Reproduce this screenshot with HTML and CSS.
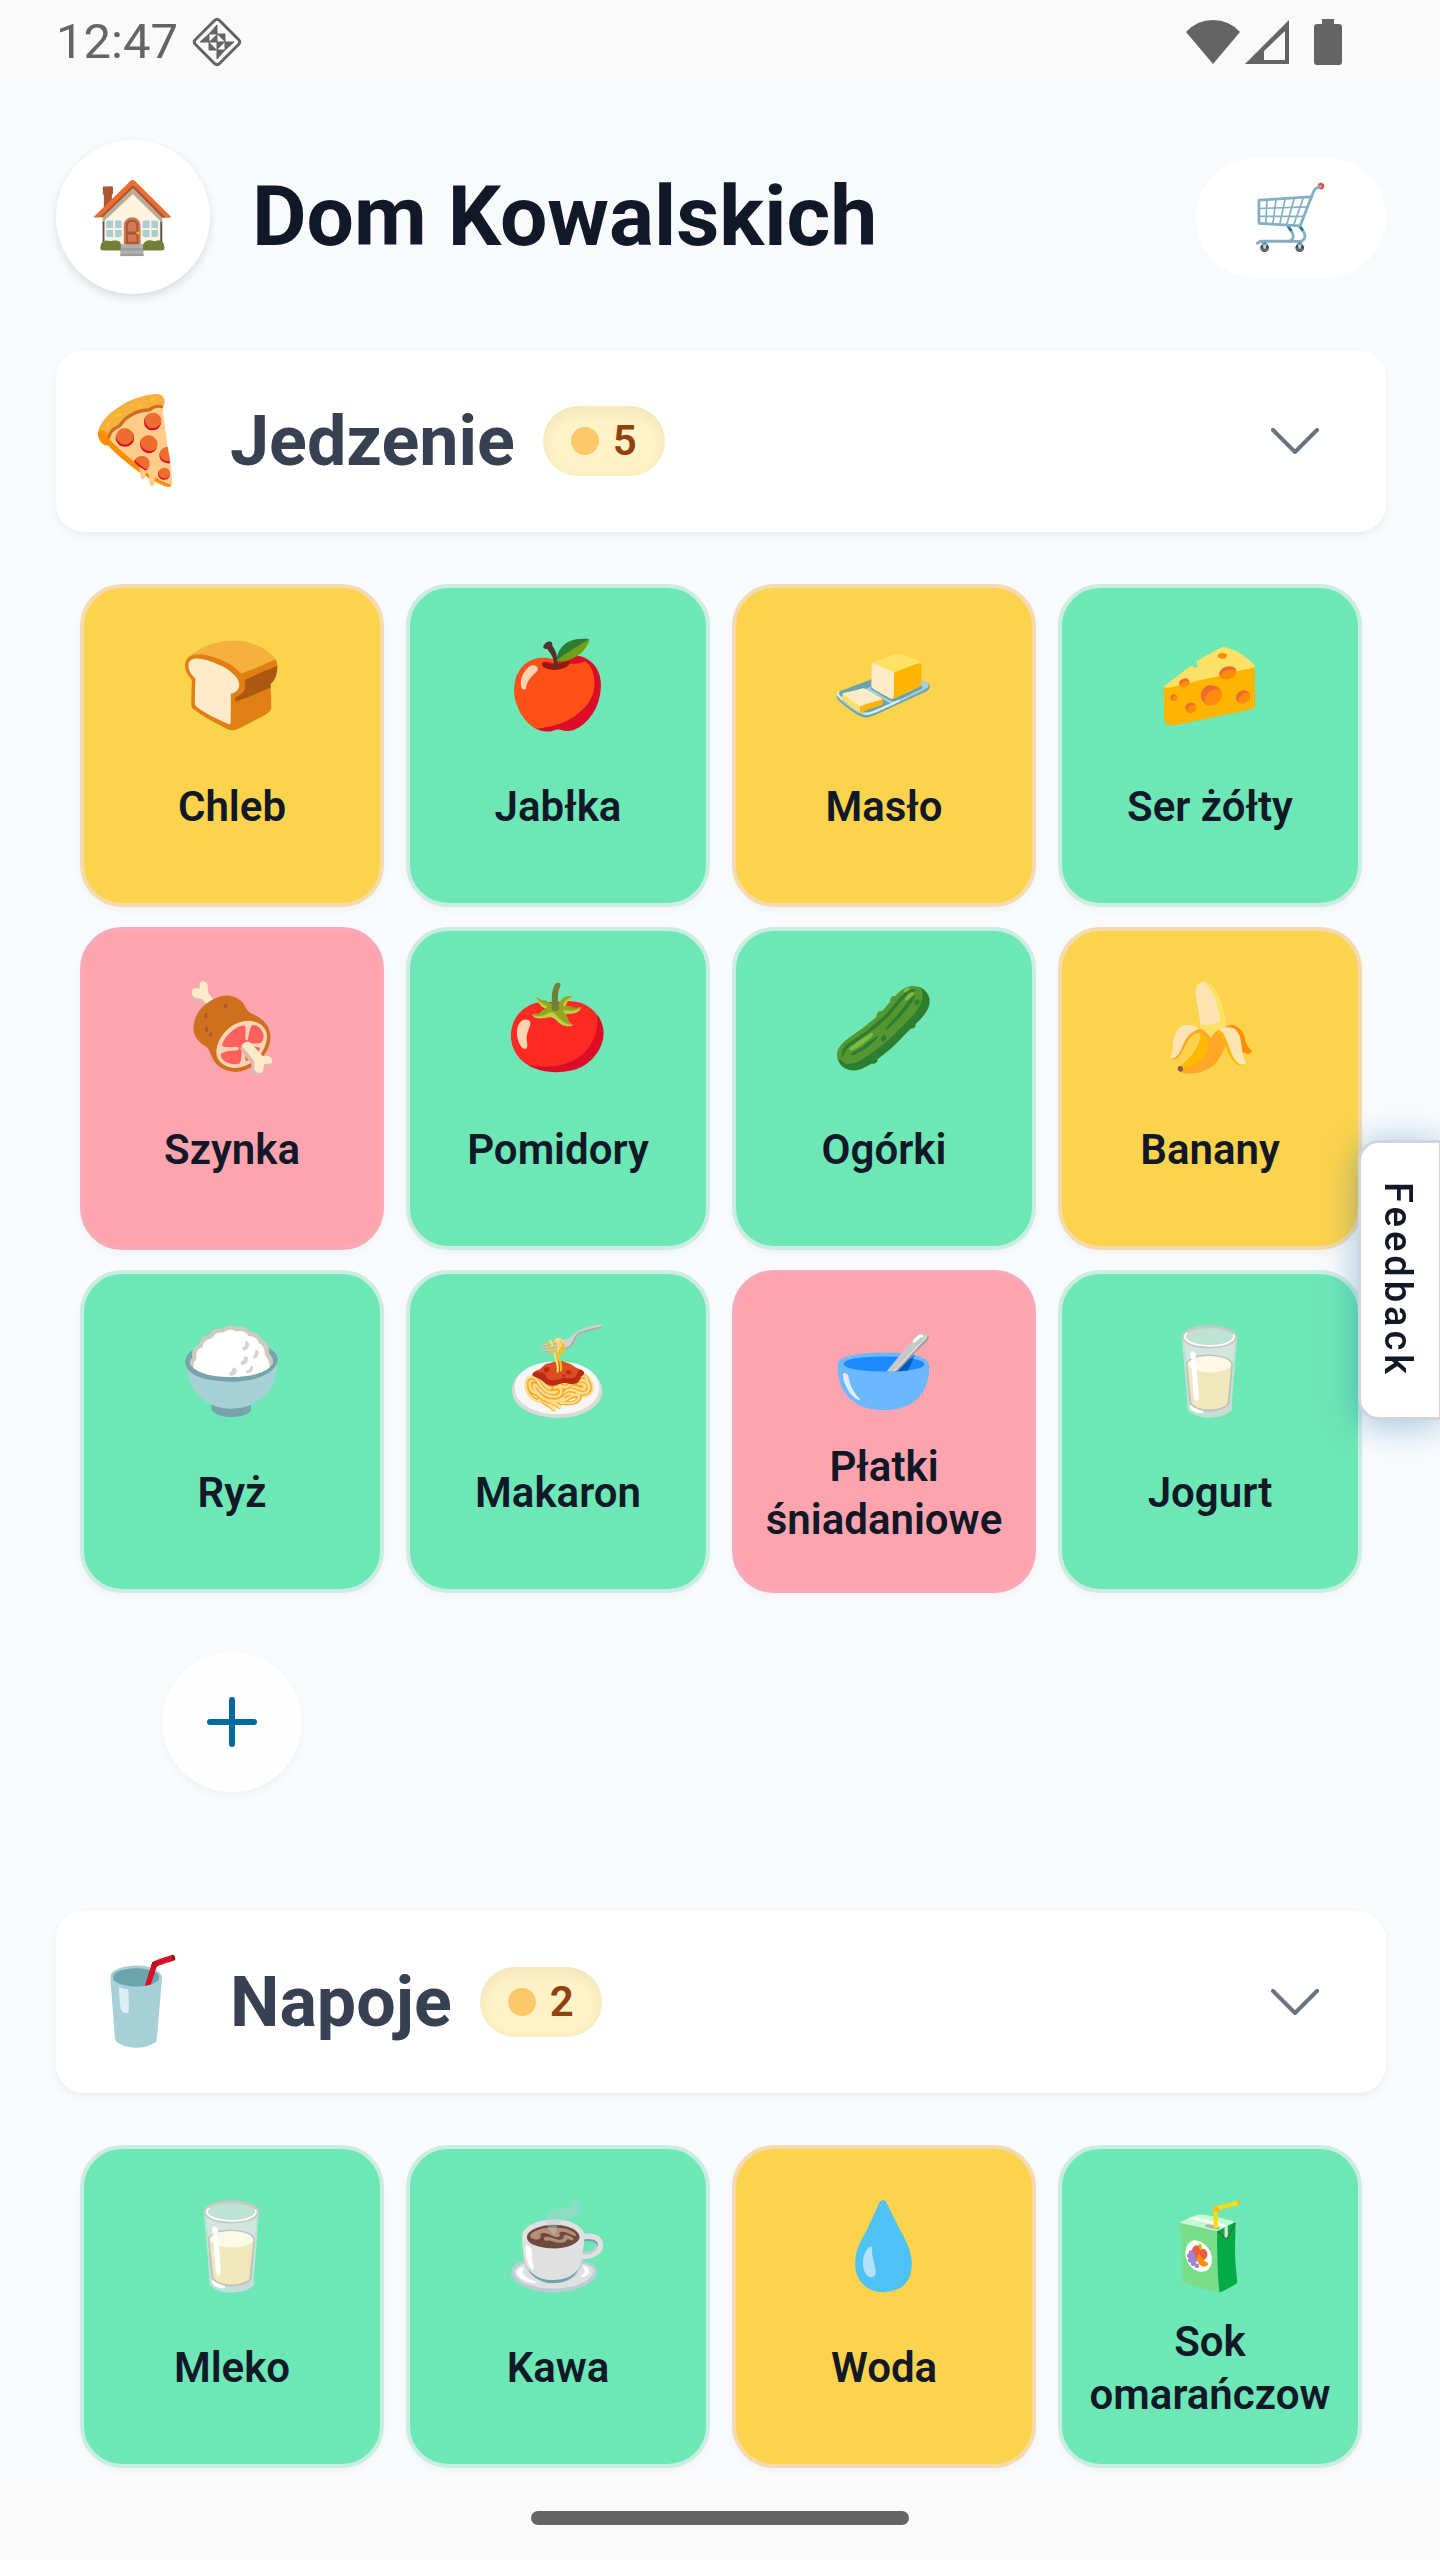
FILE: index.html
```html
<!DOCTYPE html>
<html lang="pl">
<head>
<meta charset="utf-8">
<meta name="viewport" content="width=device-width, initial-scale=1">
<title>Dom Kowalskich</title>
<link rel="stylesheet" href="styles.css">
</head>
<body>
<div class="status-bar">
  <div class="status-left">
    <span class="clock">12:47</span>
    <svg class="status-diamond" viewBox="0 0 50 50" fill="none" stroke="currentColor" aria-hidden="true">
      <path d="M22.500 3.500q2.500-2.500 5 0L46.500 22.500q2.500 2.500 0 5L27.500 46.500q-2.500 2.500-5 0L3.500 27.500q-2.500-2.500 0-5z" stroke-width="3"/>
      <path d="M25 8v9h-8zM17 17v8H8zM25 42v-9h8zM33 33v-8h9zM25 17h8v8zM17 25v8h8zM17 25l8-8v8zM25 25h8l-8 8z" fill="currentColor" stroke="none"/>
      <path d="M17 17h16v16H17zM25 8v34M8 25h34M17 17L8 25M25 8l-8 9M33 33l9-8M25 42l8-9" stroke-width="1"/>
    </svg>
  </div>
  <div class="status-right">
    <svg width="54" height="46" viewBox="0 0 54 46" fill="currentColor" aria-hidden="true"><path d="M0 13Q11 1 27 1T54 13L27 45z"/></svg>
    <svg width="46" height="46" viewBox="0 0 46 46" fill="currentColor" fill-rule="evenodd" aria-hidden="true"><path d="M45 1V45H1zM41 12L20 32v9h21z"/></svg>
    <svg class="battery" width="28" height="46" viewBox="0 0 28 46" fill="currentColor" aria-hidden="true"><path d="M8 0h12v5h5q3 0 3 3v35q0 3-3 3H3q-3 0-3-3V8q0-3 3-3h5z"/></svg>
  </div>
</div>

<main class="content">
  <header class="app-header">
    <button class="home-button" type="button" aria-label="Dom"><span class="emoji">🏠</span></button>
    <h1 class="title">Dom Kowalskich</h1>
    <button class="cart-button" type="button" aria-label="Lista zakupów"><span class="emoji">🛒</span></button>
  </header>

  <section class="category">
    <h2 class="category-heading">
      <button class="category-toggle" type="button" aria-expanded="true">
        <span class="emoji category-icon">🍕</span>
        <span>Jedzenie</span>
        <span class="badge"><span class="badge-dot"></span>5</span>
        <svg class="chevron" viewBox="0 0 48 26" fill="none" stroke="currentColor" stroke-width="4" stroke-linecap="round" stroke-linejoin="round" aria-hidden="true"><path d="M2 2L24 24 46 2"/></svg>
      </button>
    </h2>
    <div class="grid">
      <button type="button" class="item low"><span class="emoji">🍞</span><span class="label">Chleb</span></button>
      <button type="button" class="item ok"><span class="emoji">🍎</span><span class="label">Jabłka</span></button>
      <button type="button" class="item low"><span class="emoji">🧈</span><span class="label">Masło</span></button>
      <button type="button" class="item ok"><span class="emoji">🧀</span><span class="label">Ser żółty</span></button>
      <button type="button" class="item out"><span class="emoji">🍖</span><span class="label">Szynka</span></button>
      <button type="button" class="item ok"><span class="emoji">🍅</span><span class="label">Pomidory</span></button>
      <button type="button" class="item ok"><span class="emoji">🥒</span><span class="label">Ogórki</span></button>
      <button type="button" class="item low"><span class="emoji">🍌</span><span class="label">Banany</span></button>
      <button type="button" class="item ok"><span class="emoji">🍚</span><span class="label">Ryż</span></button>
      <button type="button" class="item ok"><span class="emoji">🍝</span><span class="label">Makaron</span></button>
      <button type="button" class="item out"><span class="emoji">🥣</span><span class="label">Płatki śniadaniowe</span></button>
      <button type="button" class="item ok"><span class="emoji">🥛</span><span class="label">Jogurt</span></button>
    </div>
    <div class="add-row">
      <button class="add-button" type="button" aria-label="Dodaj produkt">
        <svg viewBox="0 0 50 50" fill="none" stroke="currentColor" stroke-width="6" stroke-linecap="round" aria-hidden="true"><path d="M25 3v44M3 25h44"/></svg>
      </button>
    </div>
  </section>

  <section class="category">
    <h2 class="category-heading">
      <button class="category-toggle" type="button" aria-expanded="true">
        <span class="emoji category-icon">🥤</span>
        <span>Napoje</span>
        <span class="badge"><span class="badge-dot"></span>2</span>
        <svg class="chevron" viewBox="0 0 48 26" fill="none" stroke="currentColor" stroke-width="4" stroke-linecap="round" stroke-linejoin="round" aria-hidden="true"><path d="M2 2L24 24 46 2"/></svg>
      </button>
    </h2>
    <div class="grid">
      <button type="button" class="item ok"><span class="emoji">🥛</span><span class="label">Mleko</span></button>
      <button type="button" class="item ok"><span class="emoji">☕</span><span class="label">Kawa</span></button>
      <button type="button" class="item low"><span class="emoji">💧</span><span class="label">Woda</span></button>
      <button type="button" class="item ok"><span class="emoji">🧃</span><span class="label">Sok omarańczow</span></button>
    </div>
  </section>
</main>

<button class="feedback" type="button">Feedback</button>
<div class="nav-bar"><span class="nav-handle"></span></div>
</body>
</html>
```
FILE: styles.css
```css
* {
  box-sizing: border-box;
}

body {
  margin: 0;
  min-height: 100vh;
  display: flex;
  flex-direction: column;
  background: #f9fafc;
  color: #111827;
  font-family: Roboto, "Noto Sans", sans-serif;
}

button {
  margin: 0;
  padding: 0;
  border: 0;
  background: none;
  color: inherit;
  font: inherit;
  cursor: pointer;
}

.emoji {
  font-family: "Noto Color Emoji", sans-serif;
  font-weight: 400;
  line-height: 1;
  white-space: nowrap;
}

/* System bars */
.status-bar {
  display: flex;
  justify-content: space-between;
  align-items: center;
  height: 84px;
  padding: 0 98px 0 56px;
  background: #fafafa;
  color: #646464;
}

.status-left,
.status-right {
  display: flex;
  align-items: center;
}

.status-left {
  gap: 14px;
}

.status-right {
  gap: 4px;
}

.clock {
  font-size: 49px;
  line-height: 56px;
}

.status-diamond {
  width: 50px;
  height: 50px;
}

.battery {
  margin-left: 20px;
}

.nav-bar {
  display: flex;
  justify-content: center;
  align-items: center;
  height: 84px;
  background: #fafafa;
}

.nav-handle {
  width: 378px;
  height: 14px;
  border-radius: 7px;
  background: #646464;
}

/* Page */
.content {
  flex: 1;
  padding: 56px 54px 0 56px;
}

.app-header {
  display: flex;
  align-items: center;
  margin-bottom: 56px;
}

.home-button {
  display: grid;
  place-items: center;
  width: 154px;
  height: 154px;
  border-radius: 50%;
  background: #fff;
  box-shadow: 0 4px 10px rgba(0, 0, 0, 0.12);
  font-size: 70px;
}

.title {
  flex: 1;
  margin: 0 0 0 42px;
  font-size: 84px;
  line-height: 98px;
  font-weight: 700;
}

.cart-button {
  display: grid;
  place-items: center;
  width: 190px;
  height: 119px;
  border-radius: 60px;
  background: #fff;
  font-size: 63px;
}

.category {
  margin-bottom: 119px;
}

.category:last-child {
  margin-bottom: 0;
}

.category-heading {
  margin: 0;
  font-size: 70px;
  line-height: 82px;
  font-weight: 700;
}

.category-toggle {
  display: flex;
  align-items: center;
  width: 100%;
  height: 182px;
  padding: 0 67px 0 28px;
  border-radius: 28px;
  background: #fff;
  box-shadow: 0 4px 8px rgba(0, 0, 0, 0.05);
  color: #374151;
}

.category-icon {
  width: 105px;
  margin-right: 41px;
  font-size: 84px;
}

.badge {
  display: flex;
  align-items: center;
  gap: 14px;
  height: 70px;
  margin-left: 28px;
  padding: 0 28px;
  border-radius: 35px;
  background: #fef2c7;
  box-shadow: inset 0 4px 14px rgba(80, 60, 0, 0.08);
  color: #92400e;
  font-size: 42px;
  line-height: 50px;
  font-weight: 600;
}

.badge-dot {
  width: 28px;
  height: 28px;
  border-radius: 50%;
  background: #fbc86a;
}

.chevron {
  width: 48px;
  height: 26px;
  margin-left: auto;
  color: #6b7280;
}

.grid {
  display: grid;
  grid-template-columns: repeat(4, 1fr);
  gap: 20px 22px;
  padding: 52px 24px 0;
}

.item {
  display: flex;
  flex-direction: column;
  align-items: center;
  justify-content: center;
  gap: 14px;
  height: 323px;
  padding: 0 24px;
  border: 4px solid;
  border-radius: 42px;
  box-shadow: 0 4px 8px rgba(0, 0, 0, 0.03);
  font-size: 42px;
  line-height: 53px;
  font-weight: 600;
}

.item .emoji {
  font-size: 84px;
  line-height: 108px;
}

.label {
  display: grid;
  place-items: center;
  min-height: 106px;
}

.ok {
  background: #6ee7b7;
  border-color: #c9ede1;
}

.low {
  background: #fcd34d;
  border-color: #f5dab0;
}

.out {
  background: #fda4af;
  border-color: #f8a9b8;
}

.add-row {
  display: grid;
  grid-template-columns: repeat(4, 1fr);
  gap: 22px;
  padding: 59px 24px 0;
}

.add-button {
  display: grid;
  place-items: center;
  justify-self: center;
  width: 140px;
  height: 140px;
  border-radius: 50%;
  background: #fefefe;
  box-shadow: 0 4px 8px rgba(0, 0, 0, 0.04);
  color: #0369a1;
}

.add-button svg {
  width: 50px;
  height: 50px;
}

/* Tab pinned to the right edge */
.feedback {
  position: fixed;
  top: 50%;
  right: 0;
  transform: translateY(-50%);
  display: grid;
  place-items: center;
  width: 82px;
  height: 280px;
  padding-right: 4px;
  border: 3px solid #d1d3de;
  border-right-width: 1px;
  border-radius: 21px 0 0 21px;
  background: #fff;
  box-shadow: 0 4px 36px rgba(3, 105, 161, 0.4);
  writing-mode: vertical-rl;
  font-size: 38px;
  font-weight: 500;
  letter-spacing: 4px;
}
```
